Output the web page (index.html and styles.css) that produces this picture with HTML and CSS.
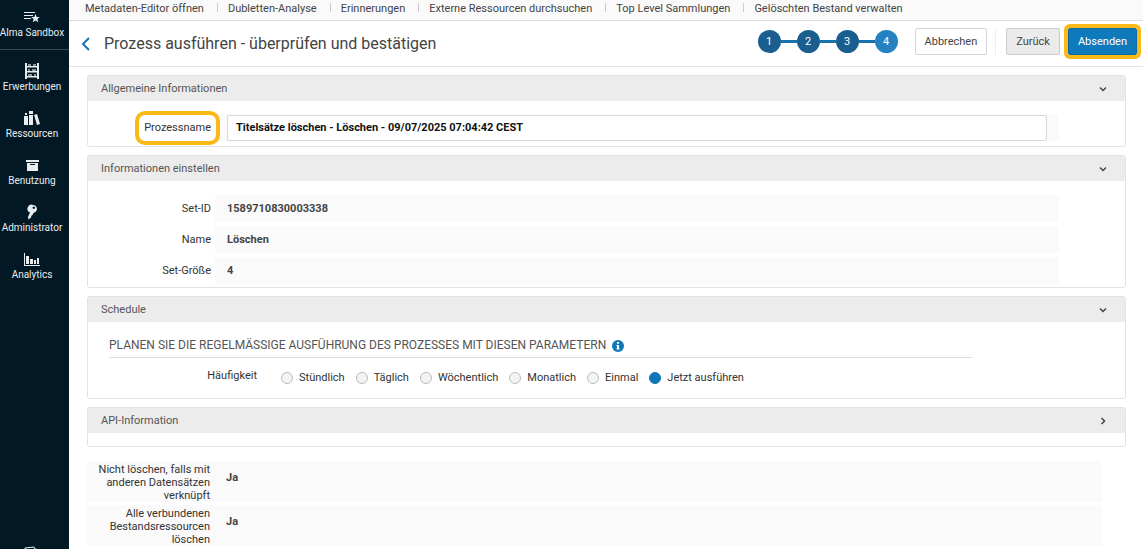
FILE: index.html
```html
<!DOCTYPE html>
<html lang="de">
<head>
    <meta charset="UTF-8">
    <meta name="viewport" content="width=device-width, initial-scale=1.0">
    <title>Prozess ausführen - überprüfen und bestätigen</title>
    <link rel="stylesheet" href="styles.css">
</head>
<body>
    <nav class="sidebar">
        <a class="side-item brand" href="#">
            <svg width="18" height="14" viewBox="0 0 18 14" fill="currentColor"><path d="M1 1h11v1H1zM1 4h9v1H1zM1 7h7v1H1z"/><path d="M12.500 3l1.200 2.900 3.100.2-2.400 2 .8 3.100-2.700-1.700-2.700 1.700.8-3.100-2.400-2 3.100-.2z"/></svg>
            <span>Alma Sandbox</span>
        </a>
        <a class="side-item" href="#">
            <svg width="16" height="16" viewBox="0 0 16 16" fill="currentColor"><path d="M1 0h2v16H1zM13 0h2v16h-2zM3 3h10v1.500H3zM3 8h10v1.500H3zM3 13h10v1.500H3z"/><path d="M4 1h3v2H4zM9 1h3v2H9zM4 6h2v2H4zM8 6h4v2H8zM4 11h4v2H4zM10 11h2v2h-2z" opacity=".6"/></svg>
            <span>Erwerbungen</span>
        </a>
        <a class="side-item" href="#">
            <svg width="16" height="16" viewBox="0 0 16 16" fill="currentColor"><path d="M0 6h4v9H0zM1 3h2v2H1zM5 1h4v3H5zM5 5h4v10H5z"/><path d="M10 5l3-1 3 10-3 1z"/></svg>
            <span>Ressourcen</span>
        </a>
        <a class="side-item" href="#">
            <svg width="16" height="16" viewBox="0 0 16 16" fill="currentColor"><path d="M2 3h13v2H2zM3 6h11v8H3zm3 1v1h5V7z" fill-rule="evenodd"/></svg>
            <span>Benutzung</span>
        </a>
        <a class="side-item" href="#">
            <svg width="16" height="16" viewBox="0 0 16 16" fill="currentColor"><path d="M9 1a4 4 0 0 1 3 6.500L9.500 9 8.500 11l-1 .5-.5 2L4.500 15.500 4 13l2-4.500A4 4 0 0 1 9 1zm.8 1.500a1.200 1.200 0 1 0 .01 0z" fill-rule="evenodd"/></svg>
            <span>Administrator</span>
        </a>
        <a class="side-item" href="#">
            <svg width="16" height="16" viewBox="0 0 16 16" fill="currentColor"><path d="M0 2h1v12h15v1H0zM2 5h3v8H2zM6 8h3v5H6zM10 9h2v4h-2zM13 7h2v6h-2z"/></svg>
            <span>Analytics</span>
        </a>
        <a class="side-item side-bottom" href="#" aria-label="Mehr">
            <svg width="16" height="16" viewBox="0 0 16 16" fill="none" stroke="currentColor"><path d="M1 2l9-1 1 2 4 1v10H1z"/></svg>
        </a>
    </nav>

    <div class="page">
        <nav class="quick-links">
            <a href="#">Metadaten-Editor öffnen</a>
            <a href="#">Dubletten-Analyse</a>
            <a href="#">Erinnerungen</a>
            <a href="#">Externe Ressourcen durchsuchen</a>
            <a href="#">Top Level Sammlungen</a>
            <a href="#">Gelöschten Bestand verwalten</a>
        </nav>

        <header class="page-header">
            <a class="back" href="#" aria-label="Zurück">
                <svg width="10" height="14" viewBox="0 0 10 14" fill="none" stroke="currentColor" stroke-width="2"><path d="M8 1L2 7l6 6"/></svg>
            </a>
            <h1>Prozess ausführen - überprüfen und bestätigen</h1>
            <ol class="steps">
                <li>1</li>
                <li>2</li>
                <li>3</li>
                <li class="current">4</li>
            </ol>
            <button type="button" class="btn">Abbrechen</button>
            <span class="divider"></span>
            <button type="button" class="btn btn-back">Zurück</button>
            <button type="submit" form="jobForm" class="btn btn-submit marked">Absenden</button>
        </header>

        <form id="jobForm" class="content">
            <section class="panel">
                <h2>Allgemeine Informationen <svg class="chevron" width="8" height="8" viewBox="0 0 8 8"><path d="M1 2.500l3 3 3-3"/></svg></h2>
                <div class="panel-body general">
                    <div class="row">
                        <label class="name" for="jobName"><span class="marked">Prozessname</span></label>
                        <div class="value value-input"><input type="text" id="jobName" value="Titelsätze löschen - Löschen - 09/07/2025 07:04:42 CEST"></div>
                    </div>
                </div>
            </section>

            <section class="panel">
                <h2>Informationen einstellen <svg class="chevron" width="8" height="8" viewBox="0 0 8 8"><path d="M1 2.500l3 3 3-3"/></svg></h2>
                <div class="panel-body set-info">
                    <div class="row"><span class="name">Set-ID</span><span class="value">1589710830003338</span></div>
                    <div class="row"><span class="name">Name</span><span class="value">Löschen</span></div>
                    <div class="row"><span class="name">Set-Größe</span><span class="value">4</span></div>
                </div>
            </section>

            <section class="panel">
                <h2>Schedule <svg class="chevron" width="8" height="8" viewBox="0 0 8 8"><path d="M1 2.500l3 3 3-3"/></svg></h2>
                <div class="panel-body schedule">
                    <h3>Planen Sie die regelmässige Ausführung des Prozesses mit diesen Parametern
                        <svg width="12" height="12" viewBox="0 0 12 12"><circle cx="6" cy="6" r="6" fill="#0f76b8"/><path d="M5 2h2v1.700H5zM4.500 5H7v3.500h.7v1H4.400v-1H5V6h-.5z" fill="#fff"/></svg>
                    </h3>
                    <div class="frequency" role="radiogroup" aria-labelledby="freqLabel">
                        <span class="freq-name" id="freqLabel">Häufigkeit</span>
                        <label><input type="radio" name="freq"> Stündlich</label>
                        <label><input type="radio" name="freq"> Täglich</label>
                        <label><input type="radio" name="freq"> Wöchentlich</label>
                        <label><input type="radio" name="freq"> Monatlich</label>
                        <label><input type="radio" name="freq"> Einmal</label>
                        <label><input type="radio" name="freq" checked> Jetzt ausführen</label>
                    </div>
                </div>
            </section>

            <section class="panel">
                <h2>API-Information <svg class="chevron" width="8" height="8" viewBox="0 0 8 8"><path d="M2.500 1l3 3-3 3"/></svg></h2>
                <div class="panel-body collapsed"></div>
            </section>

            <div class="params">
                <div class="param"><span class="name">Nicht löschen, falls mit anderen Datensätzen verknüpft</span><span class="value">Ja</span></div>
                <div class="param"><span class="name">Alle verbundenen Bestandsressourcen löschen</span><span class="value">Ja</span></div>
            </div>
        </form>
    </div>
</body>
</html>
```

FILE: styles.css
```css
* {
    box-sizing: border-box;
}
body {
    margin: 0;
    display: flex;
    height: 100vh;
    overflow: hidden;
    font-family: Roboto, sans-serif;
    font-size: 11px;
    line-height: 13px;
    color: #333;
    background: #fff;
}
a {
    color: inherit;
    text-decoration: none;
}
h1,
h2,
h3 {
    margin: 0;
    font-weight: normal;
}

/* sidebar */
.sidebar {
    flex: 0 0 69px;
    display: flex;
    flex-direction: column;
    overflow: hidden;
    background: #021824;
    color: #e8edf0;
    font-size: 10px;
}
.side-item {
    display: flex;
    flex-direction: column;
    align-items: center;
    flex: none;
    height: 47px;
    padding: 1px 5px 0 0;
    gap: 1px;
    white-space: nowrap;
}
.side-item.brand {
    height: 50px;
    padding-top: 11px;
    margin-bottom: 12px;
    border-bottom: 1px solid #3b4850;
}
.side-item.side-bottom {
    margin-top: auto;
    margin-bottom: -43px;
}

/* top links */
.page {
    flex: 1;
    min-width: 0;
}
.quick-links {
    display: flex;
    height: 21px;
    padding: 2px 16px 0;
    border-bottom: 1px solid #ddd;
    background: #fafafa;
    color: #444;
    white-space: nowrap;
}
.quick-links a + a {
    margin-left: 13px;
}
.quick-links a + a::before {
    content: "";
    display: inline-block;
    height: 9px;
    margin-right: 10px;
    border-left: 1px solid #ccc;
}

/* page header */
.page-header {
    display: flex;
    align-items: center;
    height: 46px;
    padding: 0 6px 4px 12px;
    border-bottom: 1px solid #e4e4e4;
}
.back {
    display: flex;
    padding-top: 4px;
    color: #1a75b8;
}
.page-header h1 {
    margin: 0 auto 0 13px;
    padding-top: 4px;
    font-size: 16px;
    line-height: 20px;
    color: #444;
}
.steps {
    display: flex;
    margin: 0 17px 0 0;
    padding: 0;
    list-style: none;
    color: #fff;
}
.steps li {
    width: 23px;
    height: 23px;
    border-radius: 50%;
    background: #1a5e90;
    line-height: 23px;
    text-align: center;
}
.steps li + li {
    position: relative;
    margin-left: 16px;
}
.steps li + li::before {
    content: "";
    position: absolute;
    top: 10px;
    right: 100%;
    width: 16px;
    height: 3px;
    background: #1673b0;
}
.steps .current {
    background: #2482c0;
}
.btn {
    height: 27px;
    padding: 0 9px;
    border: 1px solid #d4d4d4;
    border-radius: 2px;
    background: #fff;
    color: #444;
    font: inherit;
}
.divider {
    height: 27px;
    margin: 0 10px 0 8px;
    border-left: 1px solid #eee;
}
.btn-back {
    background: #ebebeb;
    border-color: #ccc;
}
.btn-submit {
    margin-left: 8px;
    background: #0f7abb;
    border-color: #0c6ba6;
    color: #fff;
}
.marked {
    outline: 4px solid #fbb917;
}
.btn-submit.marked {
    outline-offset: 0;
}

/* panels */
.content {
    padding: 8px 17px 0 18px;
}
.panel {
    margin-bottom: 8px;
    border: 1px solid #e2e2e2;
    border-radius: 3px;
}
.panel h2 {
    display: flex;
    align-items: center;
    justify-content: space-between;
    height: 25px;
    padding: 0 18px 0 13px;
    background: #ececec;
    font-size: 11px;
    color: #555;
}
.chevron {
    fill: none;
    stroke: #444;
    stroke-width: 1.5;
}
.general {
    padding: 13px 66px 5px 0;
}
.set-info {
    display: flex;
    flex-direction: column;
    gap: 4px;
    padding: 14px 66px 3px 0;
}
.row {
    display: flex;
    align-items: stretch;
    min-height: 27px;
}
.name {
    flex: 0 0 123px;
    align-self: center;
    text-align: right;
}
.value {
    flex: 1;
    display: flex;
    align-items: center;
    margin-left: 4px;
    padding: 0 12px;
    background: #fafafa;
    font-weight: bold;
    color: #444;
}
.name .marked {
    position: relative;
    z-index: 1;
    display: inline-block;
    line-height: 16px;
    border-radius: 1px;
    outline-offset: 5px;
}
.value-input input {
    flex: 1;
    min-width: 0;
    height: 26px;
    padding: 0 8px;
    border: 1px solid #d8d8d8;
    border-radius: 2px;
    background: #fff;
    color: #111;
    font: inherit;
}

/* schedule */
.schedule {
    height: 76px;
    padding: 12px 153px 0 21px;
}
.schedule h3 {
    display: flex;
    align-items: center;
    gap: 6px;
    height: 24px;
    border-bottom: 1px solid #ddd;
    font-size: 12px;
    color: #555;
    text-transform: uppercase;
    white-space: nowrap;
}
.frequency {
    display: flex;
    gap: 11px;
    padding-top: 11px;
    white-space: nowrap;
}
.freq-name {
    flex: 0 0 148px;
    margin-right: 13px;
    text-align: right;
}
.frequency label {
    display: flex;
    align-items: center;
    gap: 6px;
    padding-top: 2px;
}
.frequency input {
    appearance: none;
    width: 12px;
    height: 12px;
    margin: 0;
    border: 1px solid #bbb;
    border-radius: 50%;
    background: #f4f4f4;
}
.frequency input:checked {
    border-color: #0f76b8;
    background: #0f76b8;
}
.collapsed {
    height: 13px;
}

/* parameters */
.params {
    display: flex;
    flex-direction: column;
    gap: 3px;
    margin: 14px 24px 0 0;
}
.param {
    display: flex;
    min-height: 41px;
    padding-top: 1px;
    background: #fafafa;
}
.param .value {
    align-self: flex-start;
    padding-top: 9px;
}
```
